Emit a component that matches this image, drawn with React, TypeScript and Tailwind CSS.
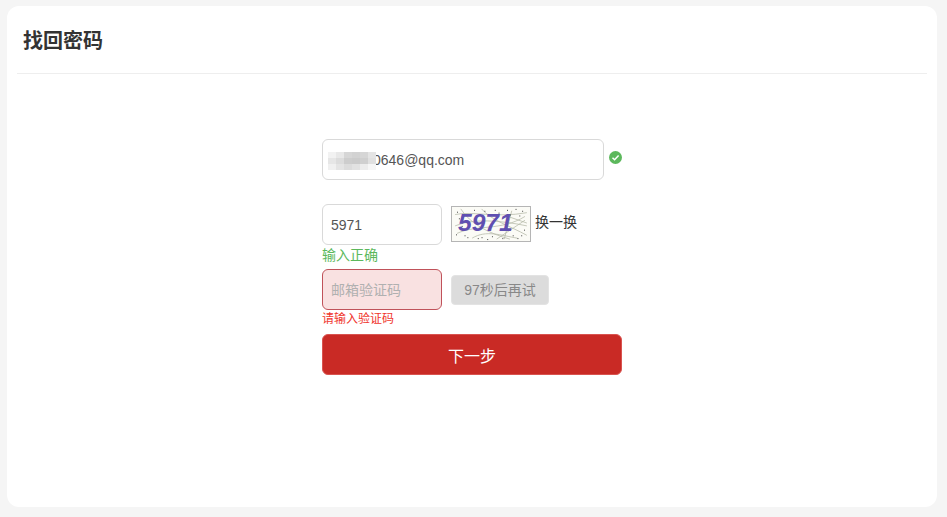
const dots = [
  [4, 5], [12, 30], [18, 8], [9, 20], [26, 33], [33, 4], [41, 31], [48, 6], [57, 3], [63, 30], [70, 9], [75, 24], [68, 33], [3, 29], [22, 3], [52, 33], [73, 4], [60, 8], [36, 34], [6, 12], [15, 32], [44, 3], [66, 2], [72, 30], [30, 32],
];

const mosaic = [
  ["#f2f2f2", "#e8e8e8", "#d6d6d6", "#d2d2d2", "#d6d6d6", "#e4e4e4"],
  ["#e6e6e6", "#dcdcdc", "#cdcdcd", "#cbcbcb", "#cfcfcf", "#e0e0e0"],
  ["#f0f0f0", "#e4e4e4", "#dcdcdc", "#e2e2e2", "#ececec", "#f6f6f6"],
];

function Captcha() {
  return (
    <svg width="80" height="36" viewBox="0 0 80 36" className="block shrink-0 border border-[#b5b5b5] bg-[#fbfbf6]">
      <g stroke="#b4b8a8" strokeWidth="0.8" fill="none">
        <path d="M2 8 C20 4 45 12 78 6" />
        <path d="M4 28 C25 18 50 26 76 10" />
        <path d="M8 2 C18 18 38 28 60 34" />
        <path d="M30 2 C40 14 60 20 78 30" />
        <path d="M76 14 L46 34" />
        <path d="M62 4 L54 34" />
        <path d="M2 20 C20 12 50 14 78 20" />
        <path d="M58 10 L78 17" />
        <path d="M20 33 C35 24 50 30 68 33" />
      </g>
      {dots.map(([x, y]) => (
        <rect key={`${x}-${y}`} x={x} y={y} width="1" height="1" fill="#333333" />
      ))}
      <text x="5" y="25" fill="#5f4fb0" fontSize="25" fontWeight="700" fontStyle="italic" fontFamily="'Liberation Sans', sans-serif" textLength="58" lengthAdjust="spacingAndGlyphs">
        5971
      </text>
    </svg>
  );
}

export default function App() {
  return (
    <div className="h-[517px] w-[947px] overflow-hidden bg-[#f5f5f5] pl-[7px] pt-[6px] font-['Liberation_Sans','Noto_Sans_CJK_SC',sans-serif]">
      <div className="h-[501px] w-[930px] rounded-xl bg-white px-[10px]">
        <div className="flex h-[68px] items-center border-b border-[#eeeeee] pl-[6px]">
          <h1 className="pt-[2px] text-xl font-bold text-[#333333]">找回密码</h1>
        </div>
        <div className="mx-auto w-[300px] pt-[65px]">
          <div className="flex items-start">
            <div className="relative h-[41px] w-[282px] overflow-hidden rounded-md border border-[#d9d9d9] pl-[8px] text-sm leading-[40px] text-[#555555]">
              <span className="pl-[42px]">0646@qq.com</span>
              <div className="absolute left-[5px] top-[12px] grid grid-cols-6">
                {mosaic.flat().map((c, i) => (
                  <div key={i} className="h-[6px] w-[8px] bg-[var(--c)]" style={{ "--c": c } as React.CSSProperties} />
                ))}
              </div>
            </div>
            <svg width="13" height="13" viewBox="0 0 13 13" className="ml-[5px] mt-[12px]">
              <circle cx="6.5" cy="6.5" r="6.5" fill="#5cb85c" />
              <path d="M3.5 6.7 L5.6 8.8 L9.6 4.6" stroke="#ffffff" strokeWidth="1.5" fill="none" />
            </svg>
          </div>

          <div className="mt-[24px] flex items-start">
            <div className="h-[41px] w-[120px] rounded-md border border-[#d9d9d9] pl-[8px] text-sm leading-[40px] text-[#555555]">5971</div>
            <div className="ml-[9px] mt-[2px]">
              <Captcha />
            </div>
            <span className="ml-1 mt-[8px] text-sm leading-[20px] text-[#333333]">换一换</span>
          </div>
          <p className="h-[24px] text-sm leading-[20px] text-[#5cb85c]">输入正确</p>

          <div className="flex items-center">
            <div className="h-[41px] w-[120px] rounded-md border border-[#c0525a] bg-[#f9e1e1] pl-[8px] text-sm leading-[41px] text-[#b0b0b0]">邮箱验证码</div>
            <button className="ml-[9px] h-[30px] w-[98px] rounded border border-[#e3e3e3] bg-[#dcdcdc] text-sm text-[#888888]">97秒后再试</button>
          </div>
          <p className="h-[24px] pt-[1px] text-xs leading-[17px] text-[#f0342c]">请输入验证码</p>

          <button className="h-[41px] w-[300px] rounded-md border border-[#d9534f] bg-[#c92a25] pt-[4px] text-base text-white">下一步</button>
        </div>
      </div>
    </div>
  );
}
